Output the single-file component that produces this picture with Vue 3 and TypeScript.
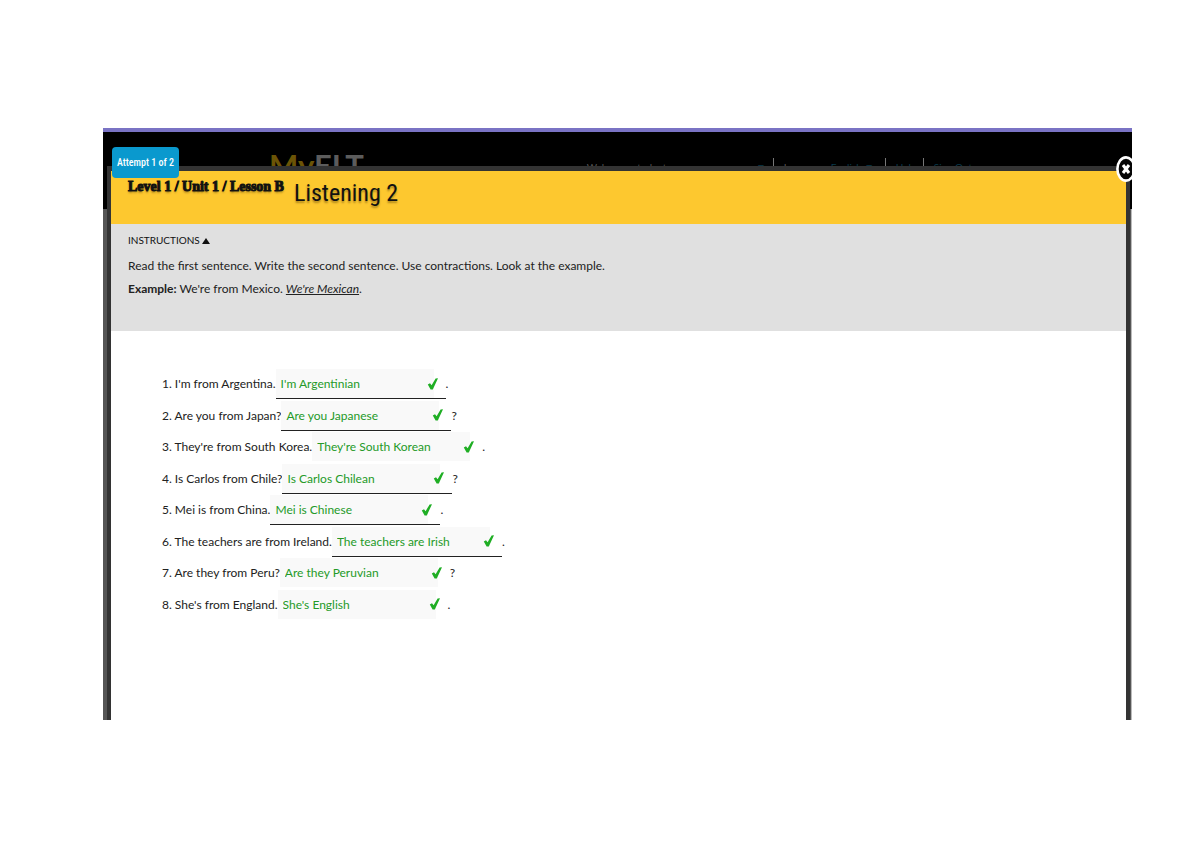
<script setup lang="ts">
import { ref } from 'vue'

interface Item {
  prompt: string
  answer: string
  end: string
  ruled: boolean
}

const items = ref<Item[]>([
  { prompt: "I'm from Argentina.", answer: "I'm Argentinian", end: '.', ruled: true },
  { prompt: 'Are you from Japan?', answer: 'Are you Japanese', end: '?', ruled: true },
  { prompt: "They're from South Korea.", answer: "They're South Korean", end: '.', ruled: false },
  { prompt: 'Is Carlos from Chile?', answer: 'Is Carlos Chilean', end: '?', ruled: true },
  { prompt: 'Mei is from China.', answer: 'Mei is Chinese', end: '.', ruled: true },
  { prompt: 'The teachers are from Ireland.', answer: 'The teachers are Irish', end: '.', ruled: true },
  { prompt: 'Are they from Peru?', answer: 'Are they Peruvian', end: '?', ruled: false },
  { prompt: "She's from England.", answer: "She's English", end: '.', ruled: false },
])
</script>

<template>
  <div class="page">
    <div class="stage">
      <header class="site">
        <div class="logo"><span>My</span>ELT</div>
        <nav class="menu">
          <span class="welcome">Welcome, student <a href="#">▼</a></span>
          <span class="language">Language: <a href="#">English ▼</a></span>
          <a href="#" class="help">Help</a>
          <a href="#" class="sign">Sign Out</a>
        </nav>
      </header>

      <main class="modal">
        <div class="title">
          <h2>Level 1 / Unit 1 / Lesson B</h2>
          <h1>Listening 2</h1>
        </div>
        <section class="instructions">
          <button type="button" class="toggle">
            INSTRUCTIONS
            <svg viewBox="0 0 8 7" width="8" height="7"><path d="M4 1 8 7H0z" fill="#111" /></svg>
          </button>
          <p>Read the first sentence. Write the second sentence. Use contractions. Look at the example.</p>
          <p><b>Example:</b> We're from Mexico. <em>We're Mexican</em>.</p>
        </section>
        <section class="exercise">
          <div v-for="(item, i) in items" :key="i" class="row">
            <label :for="`answer-${i}`">{{ i + 1 }}. {{ item.prompt }}</label>
            <span class="field" :class="{ ruled: item.ruled }">
              <input :id="`answer-${i}`" v-model="item.answer" type="text" />
              <svg class="check" viewBox="0 0 12 14" width="12" height="14">
                <path d="M0.8 7.6 3 6.2 4.6 8.2 8.6 1.4 11 1.2 5.8 12.4 3.6 12.6z" fill="#1fae24" />
              </svg>
            </span>
            <span class="end">{{ item.end }}</span>
          </div>
        </section>
      </main>

      <div class="attempt">Attempt 1 of 2</div>
      <button type="button" class="close" aria-label="Close">
        <svg viewBox="0 0 20 26" width="20" height="26">
          <ellipse cx="10" cy="13" rx="8.6" ry="11.6" fill="#050505" stroke="#fff" stroke-width="2.6" />
          <path d="M7 9 13 17M13 9 7 17" stroke="#fff" stroke-width="3" />
        </svg>
      </button>
    </div>
  </div>
</template>

<style>
body {
  margin: 0;
  background: #fff;
}
</style>

<style scoped>
.page {
  box-sizing: border-box;
  min-height: 100vh;
  padding: 128px 68px 128px 103px;
  font-family: Lato, "Liberation Sans", sans-serif;
  font-size: 12px;
  color: #222;
}
.stage {
  position: relative;
  overflow: hidden;
  background: linear-gradient(to left, #bbb 1px, #555 1px);
}
.site {
  box-sizing: border-box;
  display: flex;
  align-items: flex-start;
  height: 81px;
  border-top: 4px solid #7a73c4;
  background: #000;
}
.logo {
  margin: 15px 0 0 166px;
  font: 700 31px/36px Lato, sans-serif;
  color: #5c5c5c;
}
.logo span {
  color: #6b5406;
}
.menu {
  display: flex;
  flex: 1;
  justify-content: flex-end;
  margin: 26px 160px 0 0;
  font-size: 10px;
  line-height: 18px;
  color: #555;
}
.menu a {
  color: #093a4c;
  text-decoration: none;
}
.menu .welcome {
  flex: 0 0 186px;
}
.menu .welcome a {
  float: right;
  margin-right: 7px;
}
.menu .language {
  flex: 0 0 101px;
  padding-left: 10px;
  border-left: 1px solid #777;
}
.menu .help {
  flex: 0 0 27px;
  padding-left: 10px;
  border-left: 1px solid #777;
}
.menu .sign {
  padding-left: 10px;
  border-left: 1px solid #777;
}
.modal {
  position: relative;
  margin: -43px 2px 0 4px;
  border: solid #333;
  border-width: 5px 4px 0;
  background: #fff;
}
.title {
  display: flex;
  align-items: flex-start;
  gap: 10px;
  height: 53px;
  padding-left: 17px;
  background: #fdc82f;
  color: #111;
  text-shadow: 0 2px 2px rgba(60, 40, 0, 0.4);
}
.title h2 {
  margin: 7px 0 0;
  font: 700 14px/18px "Liberation Serif", serif;
  -webkit-text-stroke: 1px #111;
}
.title h1 {
  margin: 4px 0 0;
  font: 400 24px/36px "Roboto Condensed", Roboto, sans-serif;
}
.instructions {
  box-sizing: border-box;
  min-height: 107px;
  padding: 7px 17px 30px;
  background: #e0e0e0;
}
.instructions p {
  margin: 0;
  line-height: 23px;
}
.toggle {
  display: block;
  margin: 0 0 5px;
  padding: 0;
  border: 0;
  background: none;
  font: 10px/18px Lato, sans-serif;
  color: #111;
}
.instructions em {
  text-decoration: underline;
}
.exercise {
  display: grid;
  grid-auto-rows: 1fr;
  min-height: 252px;
  padding: 38px 51px 99px;
}
.row {
  display: flex;
  align-items: flex-start;
  line-height: 29px;
}
.field {
  display: flex;
  align-items: center;
  width: 170px;
  height: 29px;
  border-bottom: 1px solid transparent;
}
.ruled {
  border-color: #222;
}
.field input {
  box-sizing: border-box;
  width: 158px;
  height: 29px;
  padding: 0 20px 0 5px;
  border: 0;
  background: #f9f9f9;
  font: 12px Lato, sans-serif;
  color: #249a28;
}
.check {
  margin-left: -7px;
}
.attempt {
  position: absolute;
  top: 19px;
  left: 9px;
  padding: 0 5px;
  border-radius: 4px;
  background: #0a99ce;
  color: #fff;
  font: 500 10px/31px "Roboto Condensed", Roboto, sans-serif;
}
.close {
  position: absolute;
  top: 28px;
  right: -4px;
  width: 20px;
  height: 26px;
  padding: 0;
  border: 0;
  background: none;
}
.close svg {
  display: block;
}
</style>
